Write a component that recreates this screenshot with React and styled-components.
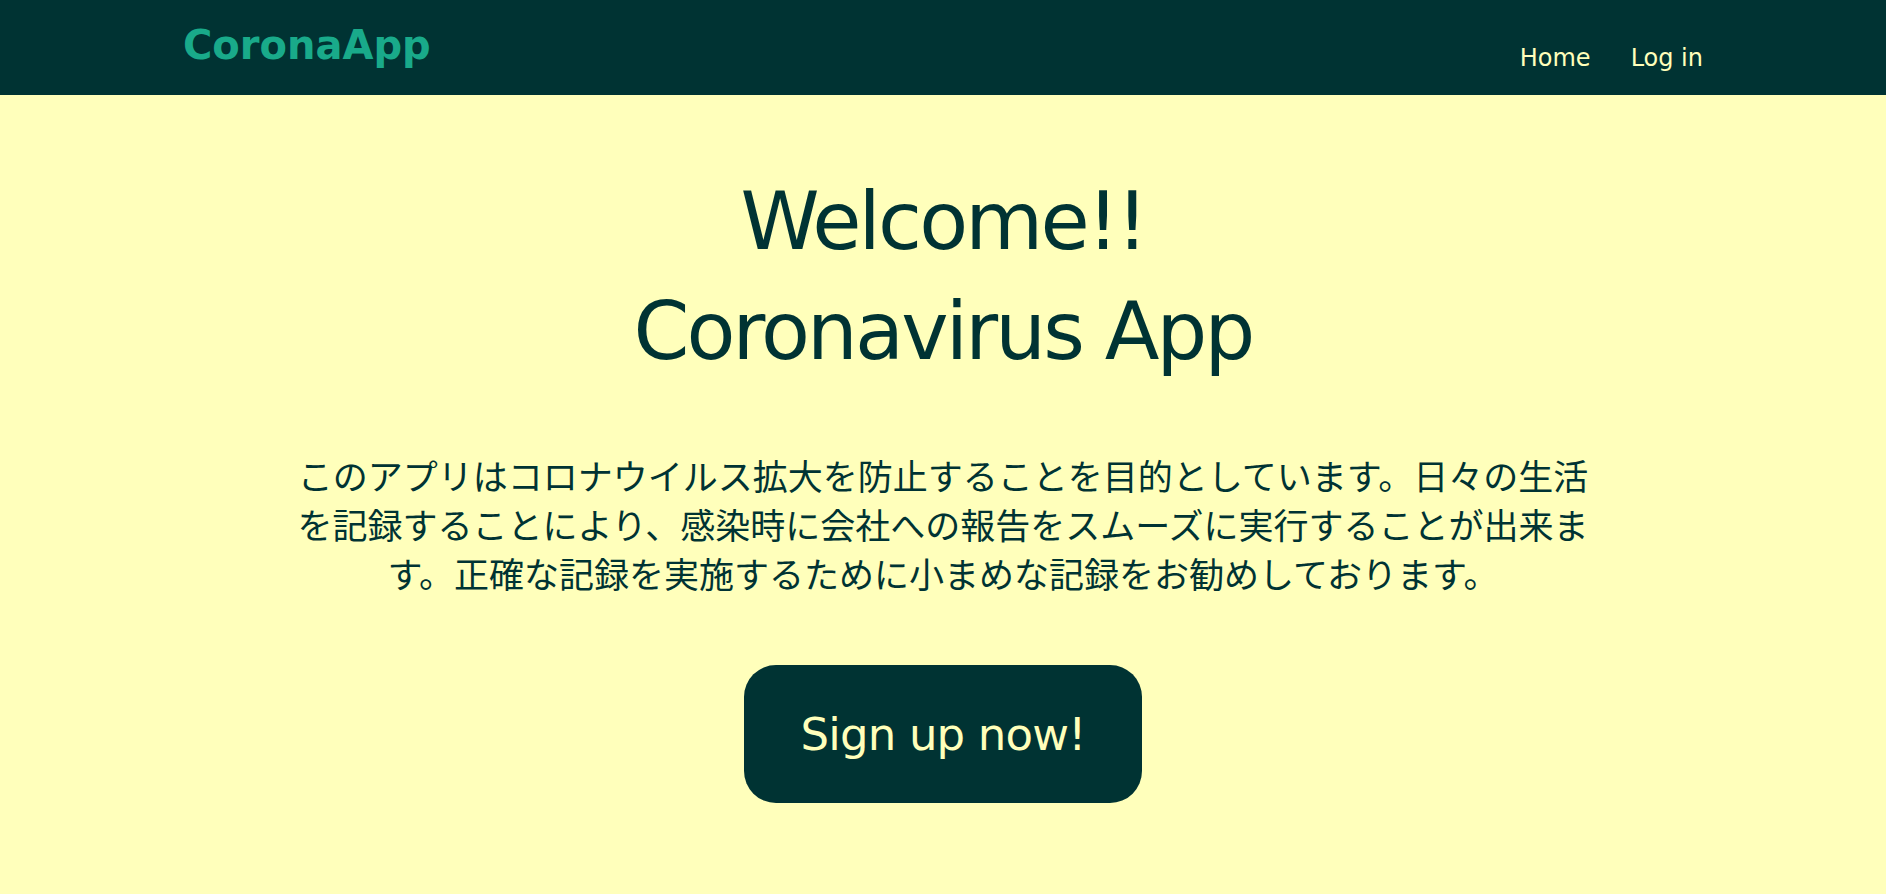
import React from 'react';
import styled, { createGlobalStyle } from 'styled-components';

const dark = '#003333';
const cream = '#ffffbb';

const GlobalStyle = createGlobalStyle`
  html, body {
    margin: 0;
    padding: 0;
    background-color: ${cream};
  }
  body {
    font-family: "DejaVu Sans", "Noto Sans CJK JP", sans-serif;
    color: ${dark};
  }
`;

const Page = styled.div`
  min-height: 100vh;
  background-color: ${cream};
`;

const Header = styled.header`
  background-color: ${dark};
  height: 95px;
`;

const HeaderInner = styled.div`
  max-width: 1520px;
  margin: 0 auto;
  display: flex;
  justify-content: space-between;
  align-items: flex-start;
`;

const Logo = styled.a`
  margin-top: 21px;
  font-family: "DejaVu Sans", sans-serif;
  font-weight: bold;
  font-size: 40px;
  line-height: 48px;
  color: #19aa8a;
  text-decoration: none;
`;

const Nav = styled.nav`
  margin-top: 43px;
  display: flex;
  gap: 40px;
`;

const NavLink = styled.a`
  font-family: "DejaVu Sans", sans-serif;
  font-size: 24px;
  line-height: 30px;
  color: ${cream};
  text-decoration: none;
`;

const Main = styled.main`
  display: flex;
  flex-direction: column;
  align-items: center;
  padding-top: 72px;
`;

const Title = styled.h1`
  margin: 0;
  font-family: "DejaVu Sans", sans-serif;
  font-weight: normal;
  font-size: 80px;
  line-height: 110px;
  letter-spacing: -2.8px;
  text-align: center;
  color: ${dark};
`;

const Lead = styled.p`
  margin: 63px 0 0;
  max-width: 1310px;
  font-family: "Noto Sans CJK JP", sans-serif;
  font-size: 35px;
  line-height: 49px;
  text-align: center;
  color: ${dark};
`;

const SignUpButton = styled.a`
  margin-top: 68px;
  display: inline-flex;
  align-items: center;
  justify-content: center;
  height: 138px;
  padding: 0 56px;
  box-sizing: border-box;
  border-radius: 32px;
  background-color: ${dark};
  color: ${cream};
  font-family: "DejaVu Sans", sans-serif;
  font-size: 45px;
  letter-spacing: -0.8px;
  text-decoration: none;
  cursor: pointer;
`;

export default function App() {
  return (
    <Page>
      <GlobalStyle />
      <Header>
        <HeaderInner>
          <Logo href="#">CoronaApp</Logo>
          <Nav>
            <NavLink href="#">Home</NavLink>
            <NavLink href="#">Log in</NavLink>
          </Nav>
        </HeaderInner>
      </Header>
      <Main>
        <Title>
          Welcome!!
          <br />
          Coronavirus App
        </Title>
        <Lead>
          このアプリはコロナウイルス拡大を防止することを目的としています。日々の生活を記録することにより、感染時に会社への報告をスムーズに実行することが出来ます。正確な記録を実施するために小まめな記録をお勧めしております。
        </Lead>
        <SignUpButton href="#">Sign up now!</SignUpButton>
      </Main>
    </Page>
  );
}
